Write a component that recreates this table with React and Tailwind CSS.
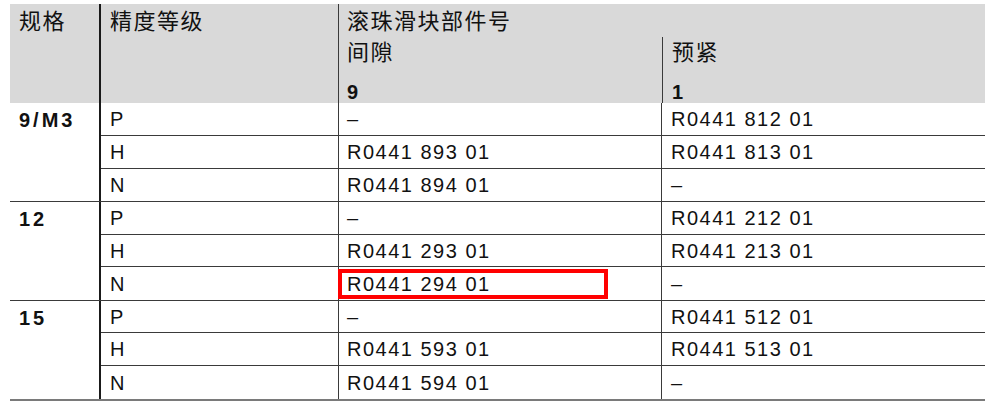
import React from 'react';

const groups = [
  {
    size: '9/M3',
    rows: [
      { grade: 'P', gap: '–', pre: 'R0441 812 01', h: 'h-[33px]' },
      { grade: 'H', gap: 'R0441 893 01', pre: 'R0441 813 01', h: 'h-[33px]' },
      { grade: 'N', gap: 'R0441 894 01', pre: '–', h: 'h-[32px]' },
    ],
  },
  {
    size: '12',
    rows: [
      { grade: 'P', gap: '–', pre: 'R0441 212 01', h: 'h-[33px]' },
      { grade: 'H', gap: 'R0441 293 01', pre: 'R0441 213 01', h: 'h-[32px]' },
      { grade: 'N', gap: 'R0441 294 01', pre: '–', h: 'h-[33px]', marked: true },
    ],
  },
  {
    size: '15',
    rows: [
      { grade: 'P', gap: '–', pre: 'R0441 512 01', h: 'h-[32px]' },
      { grade: 'H', gap: 'R0441 593 01', pre: 'R0441 513 01', h: 'h-[33px]' },
      { grade: 'N', gap: 'R0441 594 01', pre: '–', h: 'h-[33px]' },
    ],
  },
];

function Row({ row, last }) {
  return (
    <div className={`flex ${row.h} ${last ? '' : 'border-b border-[#3a3a3a]'}`}>
      <div className="w-[237px] flex items-center pl-[9px]">{row.grade}</div>
      <div className="relative w-[323px] flex items-center pl-[8px] border-l border-[#3a3a3a]">
        {row.gap}
        {row.marked && (
          <div className="absolute -left-px top-[2px] w-[270px] h-[30px] border-4 border-[#ff0000]" />
        )}
      </div>
      <div className="flex-1 flex items-center pl-[9px] border-l border-[#3a3a3a]">{row.pre}</div>
    </div>
  );
}

export default function App() {
  return (
    <div className="min-h-screen bg-white pt-[4px] pl-[10px] text-[#111] font-['Liberation_Sans','Noto_Sans_CJK_SC',sans-serif]">
      <div className="w-[975px]">
        {/* Header */}
        <div className="flex h-[99px] bg-[#d9d9d9] text-[22px] tracking-[1.5px] font-['Noto_Sans_CJK_SC',sans-serif]">
          <div className="w-[89px] pl-[9px] leading-[30px]">规格</div>
          <div className="w-[239px] pl-[9px] leading-[30px] border-l-2 border-[#1a1a1a]">精度等级</div>
          <div className="flex-1 flex flex-col border-l border-[#3a3a3a]">
            <div className="h-[33px] pl-[8px] leading-[30px]">滚珠滑块部件号</div>
            <div className="flex h-[66px]">
              <div className="w-[323px] pl-[8px]">
                <div className="leading-[26px]">间隙</div>
                <div className="mt-[18px] leading-[22px] text-[20px] font-bold tracking-normal font-['Liberation_Sans',sans-serif]">9</div>
              </div>
              <div className="flex-1 pl-[9px] border-l border-[#3a3a3a]">
                <div className="leading-[26px]">预紧</div>
                <div className="mt-[18px] leading-[22px] text-[20px] font-bold tracking-normal font-['Liberation_Sans',sans-serif]">1</div>
              </div>
            </div>
          </div>
        </div>

        {/* Body */}
        <div className="text-[20px] leading-none tracking-[1.5px]">
          {groups.map((g, gi) => (
            <div
              key={g.size}
              className={`flex ${gi === groups.length - 1 ? 'border-b-2 border-[#7a7a7a]' : 'border-b border-[#3a3a3a]'}`}
            >
              <div className="w-[89px] pl-[9px] h-[33px] flex items-center font-bold tracking-[3px]">{g.size}</div>
              <div className="flex-1 flex flex-col border-l-2 border-[#1a1a1a]">
                {g.rows.map((r, ri) => (
                  <Row key={ri} row={r} last={ri === g.rows.length - 1} />
                ))}
              </div>
            </div>
          ))}
        </div>
      </div>
    </div>
  );
}
